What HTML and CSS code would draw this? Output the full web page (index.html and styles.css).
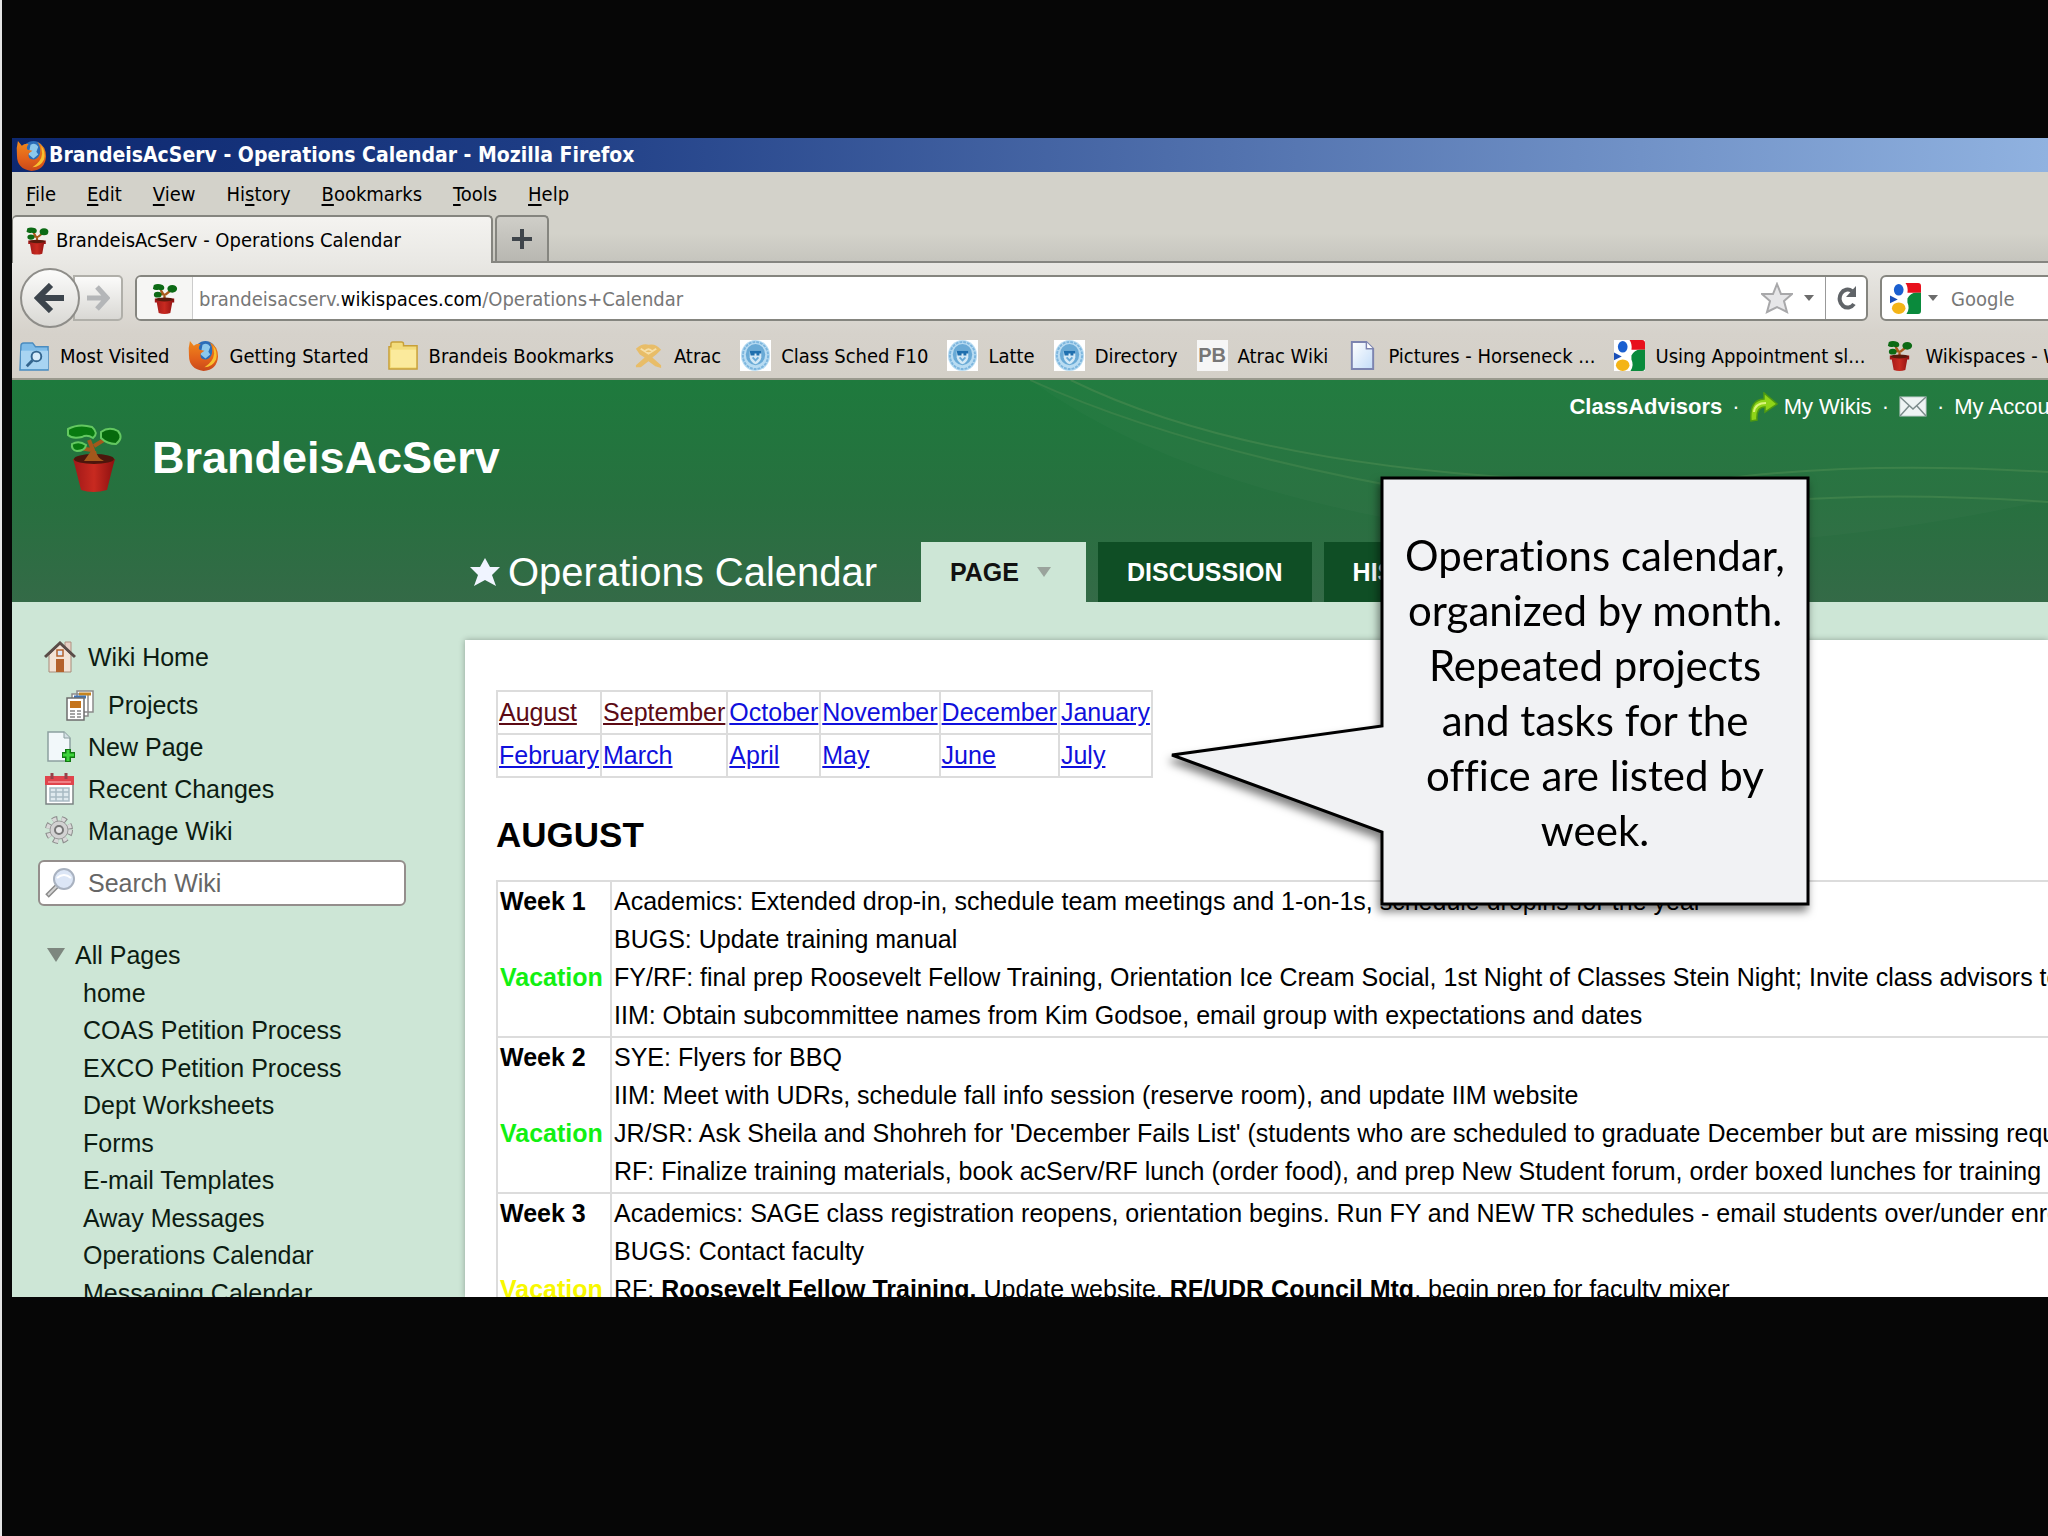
FILE: index.html
```html
<!DOCTYPE html>
<html lang="en">
  <head>
    <meta charset="UTF-8">
    <title>BrandeisAcServ - Operations Calendar</title>
    <link rel="stylesheet" href="styles.css">
  </head>
  <body>
    <!-- Shared icons -->
    <svg class="sprite" aria-hidden="true">
      <defs>
        <linearGradient id="pot-fill" x1="0" x2="1" y1="0" y2="0">
          <stop offset="0" stop-color="#a01818"/>
          <stop offset="0.5" stop-color="#c82a20"/>
          <stop offset="1" stop-color="#8c1010"/>
        </linearGradient>
        <linearGradient id="fox-fill" x1="0" x2="0" y1="0" y2="1">
          <stop offset="0" stop-color="#f08a1c"/>
          <stop offset="0.6" stop-color="#e2601a"/>
          <stop offset="1" stop-color="#c8481a"/>
        </linearGradient>
        <linearGradient id="paper-fill" x1="0" x2="1" y1="0" y2="1">
          <stop offset="0" stop-color="#ffffff"/>
          <stop offset="1" stop-color="#c3dcf8"/>
        </linearGradient>
      </defs>
      <symbol id="plant" viewBox="0 0 32 32">
        <path d="M16 18 L16 12 L10 11 M17 12 L22 8 M15 12 L12 7" fill="none" stroke="#a85a1c" stroke-width="2.4"/>
        <path d="M5 2 Q9 0 14 2 Q17 4 15 7 Q12 8 10 7 Q6 8 4 6 Z" fill="#0c6a14"/>
        <ellipse cx="24" cy="6" rx="5" ry="4" fill="#0c6a14"/>
        <ellipse cx="9" cy="12" rx="4" ry="3" fill="#0c6a14"/>
        <path d="M6 16 H26 V20 H24 L22 31 Q16 33 10 31 L8 20 H6 Z" fill="url(#pot-fill)"/>
        <ellipse cx="16" cy="17" rx="9" ry="2" fill="#5a1a0c"/>
      </symbol>
      <symbol id="firefox" viewBox="0 0 32 32">
        <circle cx="18" cy="12" r="11" fill="#2a6cb8"/>
        <path d="M15 5 Q20 2 23 7 L21 12 L23 15 L18 19 L13 15 Z" fill="#8cc8ec"/>
        <path d="M2 1 L6 6 Q9 3 13 4 Q10 8 12 10 L17 11 L13 14 Q12 21 19 20 Q25 18 25 11 Q25 5 22 2 Q31 6 31 17 Q30 31 16 32 Q1 30 1 16 Q0 8 2 1 Z" fill="url(#fox-fill)"/>
        <path d="M26 6 Q31 12 29 20 Q25 28 17 28 Q26 23 27 14 Z" fill="#f8c030"/>
      </symbol>
      <symbol id="crest" viewBox="0 0 32 32">
        <rect width="32" height="32" fill="#fff"/>
        <ellipse cx="16" cy="16" rx="15" ry="16" fill="#b9dcf2"/>
        <ellipse cx="16" cy="16" rx="13" ry="14" fill="none" stroke="#7db6de" stroke-width="2" stroke-dasharray="3 1"/>
        <ellipse cx="16" cy="15" rx="10" ry="11" fill="#69aad6"/>
        <path d="M10 11 H22 V18 Q21 23 16 25 Q11 23 10 18 Z" fill="#d4e9f6"/>
        <path d="M10 11 H22 V14 H20 V16 H17 V14 H15 V16 H11 Z" fill="#1f6fae"/>
        <path d="M13 18 L16 21 L19 18" fill="none" stroke="#69aad6" stroke-width="2"/>
      </symbol>
      <symbol id="google" viewBox="0 0 32 32">
        <rect width="32" height="32" fill="#fff"/>
        <path d="M16 0 H29 Q32 0 32 3 V10 H18 Q19 4 16 0 Z" fill="#e8101c"/>
        <path d="M18 16 Q21 10 27 10 H32 V29 Q32 32 29 32 H17 Q21 26 18 20 Z" fill="#0a8a3c"/>
        <ellipse cx="9" cy="7" rx="5" ry="6" fill="#1a5fd0"/>
        <path d="M0 13 L8 17 L0 21 Z" fill="#1a4fb8"/>
        <ellipse cx="9" cy="26" rx="7" ry="6" fill="#f4b416"/>
      </symbol>
    </svg>

    <div class="window">
      <!-- Title bar -->
      <div class="title-bar">
        <svg class="title-icon"><use href="#firefox"/></svg>
        <span>BrandeisAcServ - Operations Calendar - Mozilla Firefox</span>
      </div>

      <div class="menu-bar">
        <button type="button"><u>F</u>ile</button>
        <button type="button"><u>E</u>dit</button>
        <button type="button"><u>V</u>iew</button>
        <button type="button">Hi<u>s</u>tory</button>
        <button type="button"><u>B</u>ookmarks</button>
        <button type="button"><u>T</u>ools</button>
        <button type="button"><u>H</u>elp</button>
      </div>

      <div class="tab-strip">
        <button type="button" class="browser-tab">
          <svg class="tab-icon"><use href="#plant"/></svg>
          BrandeisAcServ - Operations Calendar
        </button>
        <button type="button" class="new-tab" aria-label="New tab">
          <svg width="20" height="20" viewBox="0 0 20 20"><path d="M10 0 V20 M0 10 H20" stroke="#3f454b" stroke-width="4"/></svg>
        </button>
      </div>

      <!-- Address and search -->
      <div class="nav-bar">
        <div class="nav-buttons">
          <button type="button" class="back" aria-label="Back">
            <svg width="32" height="30" viewBox="0 0 32 30"><path d="M17 2 L4 15 L17 28 M5 15 H30" fill="none" stroke="#3c444c" stroke-width="6"/></svg>
          </button>
          <button type="button" class="forward" aria-label="Forward">
            <svg width="24" height="26" viewBox="0 0 24 26"><path d="M11 2 L21 13 L11 24 M20 13 H1" fill="none" stroke="#b4b6b8" stroke-width="5"/></svg>
          </button>
        </div>
        <div class="url-bar">
          <span class="site-id"><svg class="icon"><use href="#plant"/></svg></span>
          <div class="url" role="textbox" aria-label="Address" contenteditable="true" spellcheck="false">brandeisacserv.<b>wikispaces.com</b>/Operations+Calendar</div>
          <button type="button" class="bare" aria-label="Bookmark this page">
            <svg width="32" height="32" viewBox="0 0 32 32"><path d="M16 2 L20 12 L31 12 L23 19 L26 30 L16 25 L6 30 L9 19 L1 12 L12 12 Z" fill="#e6e6e8" stroke="#a8a8aa" stroke-width="2"/></svg>
          </button>
          <button type="button" class="bare url-menu" aria-label="Recent pages">
            <svg width="10" height="6" viewBox="0 0 10 6"><path d="M0 0 H10 L5 6 Z" fill="#6c6c6c"/></svg>
          </button>
          <button type="button" class="bare reload" aria-label="Reload">
            <svg width="22" height="24" viewBox="0 0 22 24"><path d="M17 5 A8 9 0 1 0 19 18" fill="none" stroke="#606468" stroke-width="4"/><path d="M21 0 V11 H11 Z" fill="#606468"/></svg>
          </button>
        </div>
        <div class="search-bar">
          <svg class="icon"><use href="#google"/></svg>
          <svg width="10" height="6" viewBox="0 0 10 6"><path d="M0 0 H10 L5 6 Z" fill="#6c6c6c"/></svg>
          <input type="search" placeholder="Google" aria-label="Search the web">
        </div>
      </div>

      <!-- Bookmarks -->
      <div class="bookmarks">
        <a href="#">
          <svg class="icon" viewBox="0 0 32 32"><path d="M2 6 Q2 3 5 3 H14 L17 7 H30 V31 H1 Z" fill="#7fbce8" stroke="#4a8cc0" stroke-width="1.5"/><path d="M2 11 H30 V30 H2 Z" fill="#a8d4f2"/><circle cx="18" cy="17" r="5" fill="#d8ecfa" stroke="#33658f" stroke-width="2"/><path d="M14 21 L8 27" stroke="#33658f" stroke-width="3"/></svg>
          Most Visited
        </a>
        <a href="#"><svg class="icon"><use href="#firefox"/></svg>Getting Started</a>
        <a href="#">
          <svg class="icon" viewBox="0 0 32 32"><path d="M3 7 V4 Q3 2 5 2 H14 Q16 2 16 4 V6 H30 V30 H1 V7 Z" fill="#f3dc7c" stroke="#c8a038" stroke-width="1.5"/><path d="M3 10 H29 V28 H3 Z" fill="#fbea9c"/></svg>
          Brandeis Bookmarks
        </a>
        <a href="#">
          <svg class="icon" viewBox="0 0 32 32"><path d="M3 9 Q10 3 16 5 Q23 3 29 10 L24 15 L20 18 L29 26 V29 L23 27 L16 22 L8 28 H3 V26 L12 18 L7 15 Z" fill="#e8bd68"/><path d="M8 9 L16 14 L24 9 M12 12 Q16 7 20 12" fill="none" stroke="#f6dfa8" stroke-width="2"/></svg>
          Atrac
        </a>
        <a href="#"><svg class="icon"><use href="#crest"/></svg>Class Sched F10</a>
        <a href="#"><svg class="icon"><use href="#crest"/></svg>Latte</a>
        <a href="#"><svg class="icon"><use href="#crest"/></svg>Directory</a>
        <a href="#"><span class="pb">PB</span>Atrac Wiki</a>
        <a href="#">
          <svg class="icon" viewBox="0 0 32 32"><path d="M5 2 H20 L27 9 V30 H5 Z" fill="url(#paper-fill)" stroke="#7c84b0" stroke-width="2"/><path d="M20 2 V9 H27" fill="#fff" stroke="#7c84b0" stroke-width="1.5"/></svg>
          Pictures - Horseneck ...
        </a>
        <a href="#"><svg class="icon"><use href="#google"/></svg>Using Appointment sl...</a>
        <a href="#"><svg class="icon"><use href="#plant"/></svg>Wikispaces - Wiki</a>
      </div>

      <!-- Wiki page -->
      <div class="site-header">
        <svg class="swoosh" viewBox="0 0 1000 222" preserveAspectRatio="none" aria-hidden="true">
          <path d="M0 0 Q150 110 420 150 T1000 120 V0 Z" fill="#ffffff" fill-opacity="0.02"/>
          <path d="M0 0 Q150 70 400 114" fill="none" stroke="#4a8a50" stroke-opacity="0.5" stroke-width="2"/>
          <path d="M40 0 Q200 80 480 98 M660 102 Q800 80 1000 92 M660 130 Q800 108 1000 122" fill="none" stroke="#4a8a50" stroke-opacity="0.6" stroke-width="2"/>
        </svg>
        <div class="user-links">
          <a href="#"><strong>ClassAdvisors</strong></a>
          <span>·</span>
          <a href="#">
            <svg width="28" height="30" viewBox="0 0 28 30"><path d="M1 29 Q-1 8 14 7 V1 L27 12 L15 20 V15 Q6 15 7 28 Z" fill="#8fd418" stroke="#4f9a10" stroke-width="1.5"/><path d="M4 20 Q5 11 16 11" fill="none" stroke="#dcf47c" stroke-width="2"/></svg>
            My Wikis
          </a>
          <span>·</span>
          <a href="#" aria-label="Mail">
            <svg width="28" height="22" viewBox="0 0 28 22"><rect x="1" y="1" width="26" height="19" fill="#eef4f4" stroke="#c4d0d0"/><path d="M1 1 L14 13 L27 1 M1 20 L10 10 M27 20 L18 10" fill="none" stroke="#7c8c8c" stroke-width="1.5"/></svg>
          </a>
          <span>·</span>
          <a href="#">My Account</a>
        </div>
        <a class="brand" href="#">
          <svg width="58" height="68" viewBox="0 0 58 68">
            <path d="M27 38 L28 26 L24 16 M27 26 L14 24 M29 22 L42 14" fill="none" stroke="#a4581c" stroke-width="4"/>
            <path d="M3 5 Q14 -1 27 3 Q34 9 28 14 Q22 10 17 13 Q7 15 3 11 Z" fill="#087a10" stroke="#63c860" stroke-width="2"/>
            <path d="M36 8 Q44 2 53 7 Q59 14 51 20 Q42 20 36 14 Z" fill="#066a0c" stroke="#63c860" stroke-width="2"/>
            <path d="M7 20 Q14 16 21 21 Q20 27 12 27 Q6 26 7 20 Z" fill="#087a10" stroke="#63c860" stroke-width="2"/>
            <path d="M8 35 H50 L48 42 L42 66 Q28 70 16 66 L10 42 Z" fill="url(#pot-fill)"/>
            <ellipse cx="29" cy="35" rx="20" ry="5" fill="#4c160c"/>
            <path d="M19 37 Q26 27 27 26 L31 27 Q32 34 39 37 Z" fill="#a4581c"/>
          </svg>
          BrandeisAcServ
        </a>
        <div class="page-tabs">
          <h1>
            <svg width="30" height="28" viewBox="0 0 30 28"><path d="M15 0 L20 9 L30 9 L22 17 L26 28 L15 22 L4 28 L8 17 L0 9 L10 9 Z" fill="#f0f4ff"/></svg>
            Operations Calendar
          </h1>
          <nav>
            <a class="active" href="#">PAGE
              <svg width="14" height="10" viewBox="0 0 14 10"><path d="M0 0 H14 L7 10 Z" fill="#9aa39c"/></svg>
            </a>
            <a href="#">DISCUSSION</a>
            <a href="#">HISTORY</a>
          </nav>
        </div>
      </div>

      <div class="site-body">
        <aside class="sidebar">
          <ul class="wiki-links">
            <li><a href="#">
              <svg width="32" height="32" viewBox="0 0 32 32"><path d="M21 1 H27 V12 H21 Z" fill="#e6cfc4" stroke="#b09080"/><path d="M5 14 L16 3 L27 14 V31 H5 Z" fill="#f3e3d6" stroke="#a88a78"/><path d="M1 16 L16 2 L31 16" fill="none" stroke="#5a4c48" stroke-width="3"/><rect x="12" y="18" width="8" height="13" fill="#b4622c"/><rect x="13" y="9" width="6" height="6" fill="#dce8fa" stroke="#b4622c" stroke-width="1.5"/></svg>
              Wiki Home</a></li>
            <li class="nested"><a href="#">
              <svg width="30" height="32" viewBox="0 0 30 32"><path d="M11 2 H27 V23 H11 Z M6 5 H22 V27 H6 Z" fill="#fff" stroke="#8a8a8a" stroke-width="1.5"/><path d="M13 5 H25" stroke="#c48420" stroke-width="3"/><path d="M8 8 H20" stroke="#3f74b4" stroke-width="3"/><path d="M1 9 H18 V31 H1 Z" fill="#fff" stroke="#6e6e6e" stroke-width="1.5"/><rect x="4" y="12" width="11" height="7" fill="#c4741c"/><path d="M4 22 H9 M4 25 H9 M4 28 H9 M11 22 H15 M11 25 H15 M11 28 H15" stroke="#a4a4a4" stroke-width="2"/></svg>
              Projects</a></li>
            <li><a href="#">
              <svg width="32" height="32" viewBox="0 0 32 32"><path d="M4 1 H20 L26 7 V30 H4 Z" fill="#f2f8fa" stroke="#8ca0a0" stroke-width="1.5"/><path d="M20 1 V7 H26" fill="#d4e0e4" stroke="#8ca0a0"/><path d="M24 18 V31 M18 24 H31" stroke="#117a11" stroke-width="6"/><path d="M24 19 V30 M19 24 H30" stroke="#3fd43c" stroke-width="3"/></svg>
              New Page</a></li>
            <li><a href="#">
              <svg width="32" height="32" viewBox="0 0 32 32"><rect x="2" y="10" width="27" height="21" fill="#fff" stroke="#7c8484" stroke-width="1.5"/><path d="M1 3 H30 V12 H1 Z" fill="#e0444c"/><path d="M4 9 H27" stroke="#f49498" stroke-width="1.5"/><path d="M8 0 V6 M22 0 V6" stroke="#984048" stroke-width="3"/><path d="M6 15 H25 V28 H6 Z M6 19 H25 M6 24 H25 M12 15 V28 M19 15 V28" fill="#dfe9ee" stroke="#a9bac4" stroke-width="1.5"/></svg>
              Recent Changes</a></li>
            <li><a href="#">
              <svg width="32" height="32" viewBox="0 0 32 32"><circle cx="15" cy="15" r="11" fill="none" stroke="#8c8c8c" stroke-width="6" stroke-dasharray="5 4"/><circle cx="15" cy="15" r="11" fill="none" stroke="#d8d8d8" stroke-width="4" stroke-dasharray="4 5"/><circle cx="15" cy="15" r="9" fill="#d2d2d2" stroke="#9a9a9a"/><circle cx="15" cy="15" r="4" fill="#e8e8e8" stroke="#777" stroke-width="2"/></svg>
              Manage Wiki</a></li>
          </ul>
          <label class="wiki-search">
            <svg width="32" height="32" viewBox="0 0 32 32"><path d="M14 18 L3 29" stroke="#8a8a8a" stroke-width="5"/><path d="M13 19 L4 28" stroke="#d4d4d4" stroke-width="2"/><circle cx="20" cy="12" r="10" fill="#dce6f6" stroke="#a9b2c0" stroke-width="2"/><path d="M13 11 Q20 5 27 11" fill="none" stroke="#fff" stroke-width="2"/></svg>
            <input type="text" placeholder="Search Wiki" aria-label="Search Wiki">
          </label>
          <h2 class="all-pages">
            <svg width="18" height="14" viewBox="0 0 18 14"><path d="M0 0 H18 L9 14 Z" fill="#7d877f"/></svg>
            All Pages
          </h2>
          <ul class="page-list">
            <li><a href="#">home</a></li>
            <li><a href="#">COAS Petition Process</a></li>
            <li><a href="#">EXCO Petition Process</a></li>
            <li><a href="#">Dept Worksheets</a></li>
            <li><a href="#">Forms</a></li>
            <li><a href="#">E-mail Templates</a></li>
            <li><a href="#">Away Messages</a></li>
            <li><a href="#">Operations Calendar</a></li>
            <li><a href="#">Messaging Calendar</a></li>
          </ul>
        </aside>

        <main class="content">
          <table class="months">
            <tr>
              <td><a class="visited" href="#august">August</a></td>
              <td><a class="visited" href="#">September</a></td>
              <td><a href="#">October</a></td>
              <td><a href="#">November</a></td>
              <td><a href="#">December</a></td>
              <td><a href="#">January</a></td>
            </tr>
            <tr>
              <td><a href="#">February</a></td>
              <td><a href="#">March</a></td>
              <td><a href="#">April</a></td>
              <td><a href="#">May</a></td>
              <td><a href="#">June</a></td>
              <td><a href="#">July</a></td>
            </tr>
          </table>

          <h2 id="august">AUGUST</h2>

          <table class="weeks">
            <tr>
              <th>Week 1<br><br><span class="ok">Vacation</span></th>
              <td>
                Academics: Extended drop-in, schedule team meetings and 1-on-1s, schedule dropins for the year<br>
                BUGS: Update training manual<br>
                FY/RF: final prep Roosevelt Fellow Training, Orientation Ice Cream Social, 1st Night of Classes Stein Night; Invite class advisors to<br>
                IIM: Obtain subcommittee names from Kim Godsoe, email group with expectations and dates
              </td>
            </tr>
            <tr>
              <th>Week 2<br><br><span class="ok">Vacation</span></th>
              <td>
                SYE: Flyers for BBQ<br>
                IIM: Meet with UDRs, schedule fall info session (reserve room), and update IIM website<br>
                JR/SR: Ask Sheila and Shohreh for 'December Fails List' (students who are scheduled to graduate December but are missing requirements)<br>
                RF: Finalize training materials, book acServ/RF lunch (order food), and prep New Student forum, order boxed lunches for training
              </td>
            </tr>
            <tr>
              <th>Week 3<br><br><span class="limited">Vacation</span></th>
              <td>
                Academics: SAGE class registration reopens, orientation begins. Run FY and NEW TR schedules - email students over/under enrolled<br>
                BUGS: Contact faculty<br>
                RF: <b>Roosevelt Fellow Training.</b> Update website, <b>RF/UDR Council Mtg</b>, begin prep for faculty mixer
              </td>
            </tr>
          </table>
        </main>
      </div>
    </div>

    <!-- Callout over the page -->
    <div class="callout">
      <svg width="642" height="432" viewBox="0 0 642 432" aria-hidden="true">
        <path d="M212 2 H638 V428 H212 V356 L2 279 L212 250 Z" fill="#f1f2f4" stroke="#000" stroke-width="3"/>
      </svg>
      <p>Operations calendar, organized by month. Repeated projects and tasks for the office are listed by week.</p>
    </div>
  </body>
</html>
```
FILE: styles.css
```css
* {
  box-sizing: border-box;
}

body {
  margin: 0;
  height: 100vh;
  display: flex;
  flex-direction: column;
  padding: 138px 0 239px 10px;
  border-left: 2px solid #e4e4e4;
  background-color: #060606;
  overflow: hidden;
  position: relative;
  font-family: "Liberation Sans", Arial, sans-serif;
  font-size: 25px;
  color: #000;
}

button {
  font: inherit;
  color: inherit;
  border: none;
  background: none;
  padding: 0;
}

a {
  color: inherit;
  text-decoration: none;
}

ul {
  list-style: none;
  margin: 0;
  padding: 0;
}

svg {
  flex: none;
}

.sprite {
  position: absolute;
  width: 0;
  height: 0;
}

.icon {
  width: 31px;
  height: 31px;
}

.window {
  flex: 1;
  min-height: 0;
  display: flex;
  flex-direction: column;
  overflow: hidden;
  background-color: #d4d0c8;
}

/* Browser chrome */
.title-bar,
.menu-bar,
.tab-strip,
.nav-bar,
.bookmarks {
  flex: none;
  display: flex;
  align-items: center;
  white-space: nowrap;
  font-family: "DejaVu Sans Condensed", "DejaVu Sans", Tahoma, sans-serif;
  font-size: 20px;
}

.title-bar {
  height: 34px;
  padding-left: 4px;
  gap: 2px;
  background: linear-gradient(to right, #0d2870, #1d3c84 25%, #5272ae 60%, #90b2e0);
  color: #fff;
  font-size: 21px;
  font-weight: bold;
}

.title-icon {
  width: 31px;
  height: 31px;
}

.menu-bar {
  height: 43px;
  padding-left: 14px;
  gap: 31px;
  background-color: #d3d2ca;
}

.menu-bar u {
  text-underline-offset: 3px;
}

.tab-strip {
  height: 48px;
  gap: 2px;
  align-items: stretch;
  background: linear-gradient(#d3d2ca 40%, #c6c5be);
  border-bottom: 2px solid #858580;
}

.browser-tab {
  display: flex;
  align-items: center;
  width: 481px;
  padding-left: 10px;
  gap: 5px;
  margin-bottom: -2px;
  border: 2px solid #85857f;
  border-bottom: none;
  border-left-width: 1px;
  border-radius: 5px 5px 0 0;
  background: linear-gradient(#f4f3f0, #e9e8e4);
}

.tab-icon {
  width: 28px;
  height: 31px;
}

.new-tab {
  display: flex;
  align-items: center;
  justify-content: center;
  width: 54px;
  border: 2px solid #85857f;
  border-bottom: none;
  border-radius: 5px 5px 0 0;
  background: linear-gradient(#cfcec8, #b8b7b1);
}

.nav-bar {
  height: 70px;
  padding-left: 8px;
  background: linear-gradient(#e9e8e4, #d6d2cb);
}

.nav-buttons {
  display: flex;
  align-items: center;
  margin-right: 12px;
}

.back,
.forward {
  display: flex;
  align-items: center;
  justify-content: center;
  background: linear-gradient(#fbfbfa, #d9d8d4);
}

.back {
  width: 60px;
  height: 60px;
  border: 2px solid #8e8d89;
  border-radius: 50%;
  z-index: 1;
}

.forward {
  width: 50px;
  height: 46px;
  margin-left: -7px;
  border: 2px solid #b0afa9;
  border-radius: 0 5px 5px 0;
}

.url-bar,
.search-bar {
  display: flex;
  align-items: center;
  height: 46px;
  border: 2px solid #85857f;
  border-radius: 6px;
  background-color: #fff;
}

.url-bar {
  flex: 1;
  color: #777;
}

.site-id {
  align-self: stretch;
  display: flex;
  align-items: center;
  padding: 0 12px;
  border-right: 1px solid #ccc;
  background-color: #f6f6f4;
  border-radius: 4px 0 0 4px;
}

.url {
  flex: 1;
  padding: 2px 0 0 6px;
}

.url b {
  font-weight: normal;
  color: #000;
}

.bare {
  display: flex;
  align-items: center;
  justify-content: center;
}

.url-menu {
  width: 32px;
}

.reload {
  align-self: stretch;
  width: 41px;
  border-left: 1px solid #999;
}

.search-bar {
  width: 180px;
  margin: 0 -12px 0 12px;
  padding-left: 8px;
  gap: 7px;
}

.search-bar input {
  flex: 1;
  min-width: 0;
  padding: 2px 0 0 6px;
  border: none;
  background: none;
  font: inherit;
}

.search-bar input::placeholder {
  color: #777;
  opacity: 1;
}

.bookmarks {
  height: 47px;
  padding-left: 7px;
  gap: 19px;
  background: linear-gradient(#d6d2cb, #d4d0c8);
  border-bottom: 2px solid #9a9a8e;
}

.bookmarks a {
  display: flex;
  align-items: center;
  gap: 10px;
}

.pb {
  width: 31px;
  line-height: 31px;
  background-color: #f6f6f6;
  color: #777;
  font-family: "Liberation Sans", Arial, sans-serif;
  font-weight: bold;
  text-align: center;
}

/* Wiki header */
.site-header {
  flex: none;
  position: relative;
  height: 222px;
  display: flex;
  flex-direction: column;
  background: linear-gradient(#1e7a3d, #27703f 55%, #346a47);
  color: #fff;
}

.swoosh {
  position: absolute;
  top: 0;
  right: 0;
  width: 50%;
  height: 100%;
}

.user-links {
  position: relative;
  display: flex;
  justify-content: flex-end;
  align-items: center;
  gap: 10px;
  height: 54px;
  margin-right: -20px;
  font-size: 22px;
  white-space: nowrap;
}

.user-links a {
  display: flex;
  align-items: center;
  gap: 6px;
}

.brand {
  position: relative;
  display: flex;
  align-items: center;
  gap: 29px;
  height: 48px;
  padding-left: 53px;
  font-size: 45px;
  font-weight: bold;
}

.page-tabs {
  position: relative;
  display: flex;
  margin-top: auto;
  padding-left: 458px;
}

h1 {
  display: flex;
  align-items: center;
  gap: 8px;
  width: 451px;
  margin: 0;
  font-size: 40px;
  font-weight: normal;
  white-space: nowrap;
}

.page-tabs nav {
  display: flex;
  gap: 12px;
}

.page-tabs nav a {
  display: flex;
  align-items: center;
  height: 60px;
  padding: 0 29px;
  background-color: #0f4e25;
  font-weight: bold;
}

.page-tabs nav .active {
  gap: 18px;
  padding-right: 35px;
  background-color: #cde6d6;
  color: #111;
}

/* Wiki body */
.site-body {
  flex: 1;
  min-height: 0;
  display: flex;
  background-color: #cde6d6;
}

.sidebar {
  flex: none;
  width: 453px;
  padding: 34px 59px 0 26px;
  color: #0c1c12;
}

.wiki-links li {
  padding-left: 6px;
}

.wiki-links a {
  display: flex;
  align-items: center;
  gap: 12px;
  height: 42px;
}

.wiki-links .nested {
  padding: 6px 0 0 28px;
}

.wiki-search {
  display: flex;
  align-items: center;
  gap: 12px;
  height: 46px;
  margin-top: 8px;
  padding-left: 4px;
  border: 2px solid #948e8c;
  border-radius: 6px;
  background-color: #fff;
}

.wiki-search input {
  flex: 1;
  min-width: 0;
  padding: 0;
  border: none;
  font: inherit;
}

.wiki-search input::placeholder {
  color: #666;
  opacity: 1;
}

.all-pages {
  display: flex;
  align-items: center;
  gap: 10px;
  margin: 30px 0 0;
  padding-left: 9px;
  font-size: 25px;
  font-weight: normal;
  line-height: 38px;
}

.page-list {
  padding-left: 45px;
  line-height: 37px;
  white-space: nowrap;
}

.page-list li:nth-child(odd) {
  line-height: 38px;
}

.content {
  flex: 1;
  min-width: 0;
  overflow: hidden;
  margin-top: 38px;
  padding: 50px 0 0 31px;
  background-color: #fff;
  box-shadow: 0 0 6px rgba(0, 0, 0, 0.3);
  white-space: nowrap;
}

table {
  border-collapse: collapse;
}

th,
td {
  padding: 0 2px 2px;
  border: 2px solid #dcdcdc;
  text-align: left;
  vertical-align: top;
}

.months td {
  height: 43px;
  padding: 1px;
  vertical-align: middle;
}

.months a {
  color: #1010dc;
  text-decoration: underline;
}

.months .visited {
  color: #5c0a14;
}

.content h2 {
  margin: 37px 0 25px;
  font-size: 35px;
  line-height: 40px;
}

.weeks {
  line-height: 38px;
  width: 2000px;
}

.weeks th {
  width: 114px;
}

.ok {
  color: #12f012;
}

.limited {
  color: #f8f800;
}

/* Callout */
.callout {
  position: absolute;
  top: 476px;
  left: 1168px;
  filter: drop-shadow(-2px 6px 4px rgba(0, 0, 0, 0.5));
}

.callout svg {
  display: block;
}

.callout p {
  position: absolute;
  top: 52px;
  left: 230px;
  width: 390px;
  margin: 0;
  font-family: Lato, Carlito, sans-serif;
  font-size: 42px;
  font-variant-ligatures: none;
  line-height: 55px;
  text-align: center;
}
```
